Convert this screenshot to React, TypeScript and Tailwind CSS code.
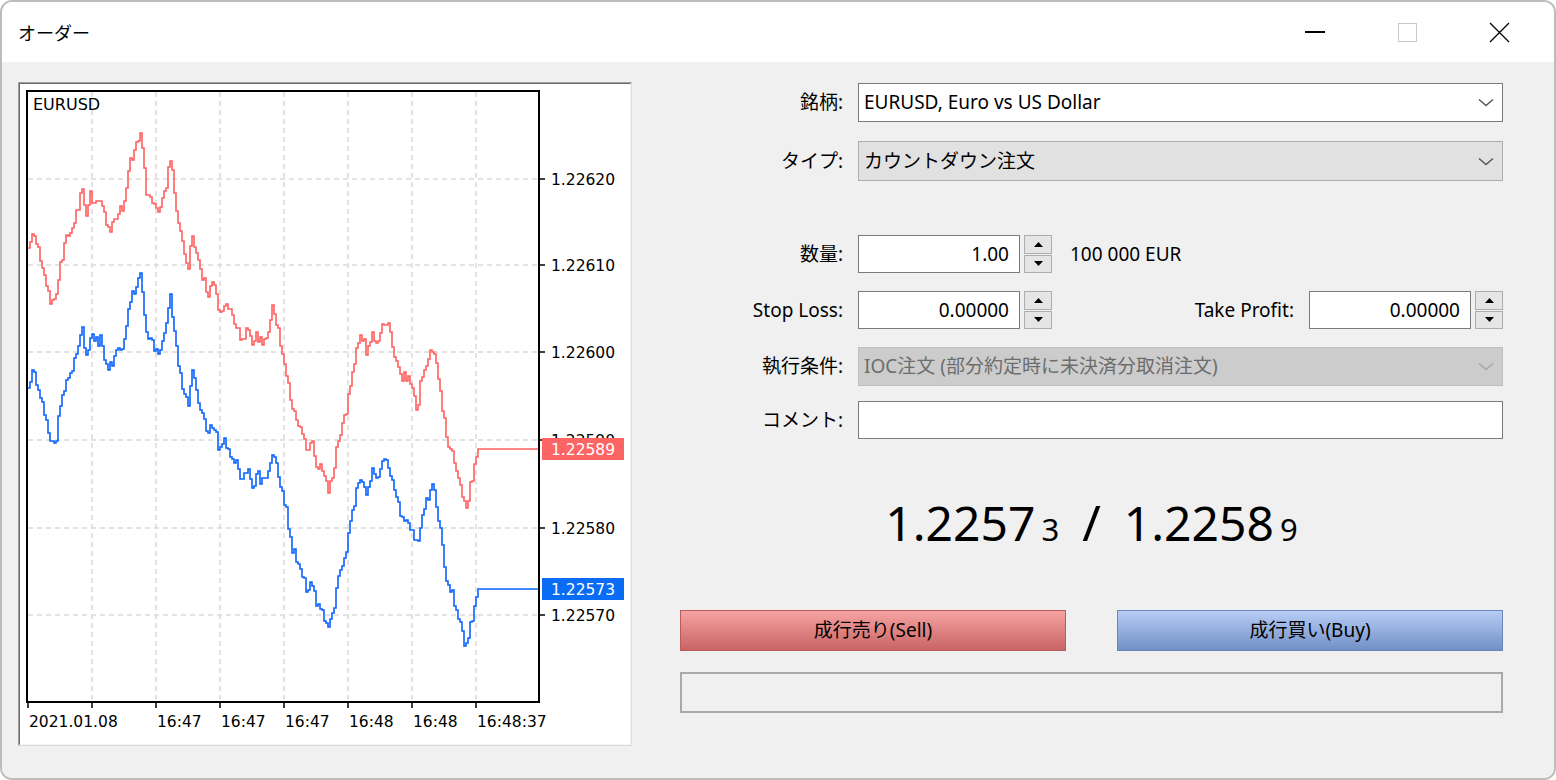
import React from 'react';

const RED: [number, number][] = [
  [28, 248], [33, 232], [38, 250], [44, 275], [50, 300], [55, 305], [60, 262], [66, 240], [72, 228], [78, 205],
  [82, 190], [86, 215], [90, 195], [95, 203], [100, 200], [104, 215], [108, 232], [112, 222], [118, 210], [123, 205],
  [127, 178], [131, 158], [135, 150], [140, 135], [143, 162], [146, 195], [150, 198], [154, 208], [158, 212], [163, 200],
  [167, 178], [170, 158], [174, 190], [178, 225], [183, 248], [188, 268], [192, 235], [197, 255], [203, 280], [208, 292],
  [214, 285], [219, 310], [224, 302], [230, 312], [236, 325], [241, 338], [247, 330], [252, 345], [257, 335], [263, 345],
  [268, 332], [272, 310], [276, 322], [281, 350], [286, 372], [291, 405], [296, 420], [301, 428], [306, 448], [311, 440],
  [316, 462], [322, 472], [328, 490], [332, 478], [337, 445], [342, 425], [347, 405], [352, 372], [356, 350], [361, 335],
  [366, 350], [372, 332], [377, 342], [382, 325], [387, 320], [392, 345], [397, 362], [402, 378], [407, 375], [412, 392],
  [417, 408], [421, 378], [426, 362], [431, 345], [436, 362], [441, 398], [446, 438], [451, 450], [456, 472], [461, 490],
  [465, 510], [469, 492], [473, 472], [477, 452], [478, 449],
];

const interp = (x: number) => {
  for (let i = 0; i < RED.length - 1; i++) {
    const [x0, y0] = RED[i];
    const [x1, y1] = RED[i + 1];
    if (x >= x0 && x <= x1) return y0 + ((y1 - y0) * (x - x0)) / (x1 - x0);
  }
  return RED[RED.length - 1][1];
};

const noise = (x: number, seed: number) => {
  const v = Math.sin(x * 12.9898 + seed * 78.233) * 43758.5453;
  return (v - Math.floor(v) - 0.5) * 11;
};

const buildPath = (offset: number, seed: number) => {
  let d = '';
  let first = true;
  for (let x = 28; x <= 478; x += 2) {
    const y = Math.round(interp(x) + offset + (x > 30 && x < 476 ? noise(x, seed) : 0));
    if (first) {
      d += `M${x} ${y}`;
      first = false;
    } else {
      d += ` H${x} V${y}`;
    }
  }
  d += ` H478 V${449 + offset} H540`;
  return d;
};

const PRICES = [
  { y: 179, t: '1.22620' },
  { y: 265, t: '1.22610' },
  { y: 352, t: '1.22600' },
  { y: 440, t: '1.22590' },
  { y: 528, t: '1.22580' },
  { y: 615, t: '1.22570' },
];
const TIMES = [
  { x: 28, t: '2021.01.08', grid: false },
  { x: 92, t: '', grid: true },
  { x: 156, t: '16:47', grid: true },
  { x: 220, t: '16:47', grid: true },
  { x: 284, t: '16:47', grid: true },
  { x: 348, t: '16:48', grid: true },
  { x: 412, t: '16:48', grid: true },
  { x: 476, t: '16:48:37', grid: true },
];

const Chart = () => (
  <div className="w-[614px] h-[664px] border border-t-[#a0a0a0] border-l-[#a0a0a0] border-r-[#dcdcdc] border-b-[#dcdcdc]">
    <div className="w-full h-full border border-t-[#696969] border-l-[#696969] border-r-[#f4f4f4] border-b-[#f4f4f4] bg-white">
      <svg width="610" height="660" viewBox="20 84 610 660" className="block font-['DejaVu_Sans',sans-serif]">
        {PRICES.map((p) => (
          <line key={p.t} x1="28" x2="539" y1={p.y} y2={p.y} stroke="#dadada" strokeWidth="1.5" strokeDasharray="5 4" />
        ))}
        {TIMES.filter((t) => t.grid).map((t) => (
          <line key={t.x} x1={t.x} x2={t.x} y1="92" y2="702" stroke="#dadada" strokeWidth="1.5" strokeDasharray="5 4" />
        ))}
        <path d={buildPath(0, 1)} fill="none" stroke="#ff5f5f" strokeWidth="1.6" />
        <path d={buildPath(140, 2)} fill="none" stroke="#0a62ff" strokeWidth="1.6" />
        <rect x="27" y="91" width="512" height="611" fill="none" stroke="#000" strokeWidth="2" />
        <text x="33" y="110" fontSize="16" fill="#000">EURUSD</text>
        {PRICES.map((p) => (
          <g key={p.t}>
            <line x1="540" x2="545" y1={p.y} y2={p.y} stroke="#000" strokeWidth="1.5" />
            <text x="551" y={p.y + 6} fontSize="15.5" fill="#000">{p.t}</text>
          </g>
        ))}
        {TIMES.map((t) => (
          <g key={t.x}>
            <line x1={t.x} x2={t.x} y1="702" y2="708" stroke="#000" strokeWidth="1.5" />
            {t.t && <text x={t.x + 1} y="727" fontSize="15.5" fill="#000">{t.t}</text>}
          </g>
        ))}
        <rect x="542" y="438" width="82" height="22" fill="#fd6464" />
        <text x="551" y="455" fontSize="15.5" fill="#fff">1.22589</text>
        <rect x="542" y="578" width="82" height="22" fill="#0a6cf5" />
        <text x="551" y="595" fontSize="15.5" fill="#fff">1.22573</text>
      </svg>
    </div>
  </div>
);

const Chevron = ({ color = '#5a5a5a' }: { color?: string }) => (
  <svg width="16" height="9" viewBox="0 0 16 9" className="shrink-0">
    <path d="M1 1.5 L8 7.5 L15 1.5" fill="none" stroke={color} strokeWidth="1.6" />
  </svg>
);

const Spinner = () => (
  <div className="ml-[4px] w-[28px] h-[38px] flex flex-col gap-[1px]">
    <div className="flex-1 bg-[#e5e5e5] border border-[#adadad] flex items-center justify-center">
      <svg width="9" height="5" viewBox="0 0 9 5"><path d="M4.5 0 L9 5 L0 5 Z" fill="#000" /></svg>
    </div>
    <div className="flex-1 bg-[#e5e5e5] border border-[#adadad] flex items-center justify-center">
      <svg width="9" height="5" viewBox="0 0 9 5"><path d="M0 0 L9 0 L4.5 5 Z" fill="#000" /></svg>
    </div>
  </div>
);

const Label = ({ children }: { children: React.ReactNode }) => (
  <div className="w-[163px] text-right text-[19px] text-black">{children}</div>
);

const NumInput = ({ value }: { value: string }) => (
  <div className="ml-[15px] w-[162px] h-[38px] bg-white border border-[#7a7a7a] flex items-center justify-end pr-[10px] text-[19px]">
    {value}
  </div>
);

const App = () => {
  return (
    <div className="w-[1556px] h-[780px] bg-white font-['Noto_Sans','Noto_Sans_CJK_JP',sans-serif] text-black">
      <div className="w-full h-full rounded-[12px] border-2 border-[#bcbcbc] overflow-hidden flex flex-col">
        {/* Title bar */}
        <div className="h-[60px] bg-white flex items-center shrink-0">
          <div className="pl-[16px] text-[18px] font-['Noto_Sans_CJK_JP',sans-serif]">オーダー</div>
          <div className="ml-auto flex items-center h-full">
            <div className="w-[92px] h-full flex items-center justify-center">
              <div className="w-[20px] h-[1.5px] bg-black" />
            </div>
            <div className="w-[92px] h-full flex items-center justify-center">
              <div className="w-[19px] h-[19px] border border-[#c8c8c8]" />
            </div>
            <div className="w-[92px] h-full flex items-center justify-center">
              <svg width="21" height="21" viewBox="0 0 21 21">
                <path d="M1 1 L20 20 M20 1 L1 20" stroke="#000" strokeWidth="1.3" />
              </svg>
            </div>
            <div className="w-[9px]" />
          </div>
        </div>

        {/* Body */}
        <div className="flex-1 bg-[#f0f0f0] flex pl-[16px] pt-[20px]">
          <Chart />

          <div className="ml-[48px] w-[823px] flex flex-col">
            {/* 銘柄 */}
            <div className="mt-[1px] h-[39px] flex items-center">
              <Label>銘柄:</Label>
              <div className="ml-[15px] flex-1 h-full bg-white border border-[#7a7a7a] flex items-center pl-[5px] pr-[8px] text-[19px]">
                <span className="flex-1">EURUSD, Euro vs US Dollar</span>
                <Chevron />
              </div>
            </div>

            {/* タイプ */}
            <div className="mt-[19px] h-[40px] flex items-center">
              <Label>タイプ:</Label>
              <div className="ml-[15px] flex-1 h-full bg-[#e1e1e1] border border-[#adadad] flex items-center pl-[5px] pr-[8px] text-[19px]">
                <span className="flex-1">カウントダウン注文</span>
                <Chevron />
              </div>
            </div>

            {/* 数量 */}
            <div className="mt-[54px] h-[38px] flex items-center">
              <Label>数量:</Label>
              <NumInput value="1.00" />
              <Spinner />
              <span className="ml-[18px] text-[19px]">100 000 EUR</span>
            </div>

            {/* Stop Loss / Take Profit */}
            <div className="mt-[18px] h-[38px] flex items-center">
              <Label>Stop Loss:</Label>
              <NumInput value="0.00000" />
              <Spinner />
              <span className="ml-auto text-[19px]">Take Profit:</span>
              <NumInput value="0.00000" />
              <Spinner />
            </div>

            {/* 執行条件 */}
            <div className="mt-[18px] h-[39px] flex items-center">
              <Label>執行条件:</Label>
              <div className="ml-[15px] flex-1 h-full bg-[#cccccc] border border-[#bfbfbf] flex items-center pl-[5px] pr-[8px] text-[19px] text-[#6d6d6d]">
                <span className="flex-1">IOC注文 (部分約定時に未決済分取消注文)</span>
                <Chevron color="#a8a8a8" />
              </div>
            </div>

            {/* コメント */}
            <div className="mt-[15px] h-[38px] flex items-center">
              <Label>コメント:</Label>
              <div className="ml-[15px] flex-1 h-full bg-white border border-[#7a7a7a]" />
            </div>

            {/* Price */}
            <div className="mt-[53px] h-[60px] flex items-center justify-center">
              <div className="flex items-baseline leading-none">
                <span className="text-[48px]">1.2257</span>
                <span className="text-[31px] ml-[6px]">3</span>
                <span className="text-[50px] mx-[23px]">/</span>
                <span className="text-[48px]">1.2258</span>
                <span className="text-[31px] ml-[6px]">9</span>
              </div>
            </div>

            {/* Buttons */}
            <div className="mt-[58px] h-[41px] flex justify-between">
              <div className="w-[386px] h-full border border-[#b85c5c] bg-gradient-to-b from-[#f6a3a3] to-[#c86464] flex items-center justify-center text-[19px]">
                成行売り(Sell)
              </div>
              <div className="w-[386px] h-full border border-[#6a86bd] bg-gradient-to-b from-[#b8cdf5] to-[#7190c6] flex items-center justify-center text-[19px]">
                成行買い(Buy)
              </div>
            </div>

            <div className="mt-[21px] h-[41px] border-2 border-[#a9a9a9] bg-[#f0f0f0]" />
          </div>
        </div>
      </div>
    </div>
  );
};

export default App;
